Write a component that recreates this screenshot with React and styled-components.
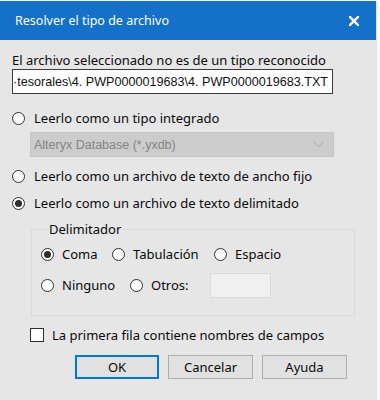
import React from "react";
import styled, { createGlobalStyle } from "styled-components";

const Global = createGlobalStyle`
  html, body { margin: 0; padding: 0; background: #f4f7fb; }
  body { font-family: "Noto Sans", "Open Sans", sans-serif; }
  * { box-sizing: border-box; }
`;

const Screen = styled.div`
  width: 380px;
  height: 400px;
  display: flex;
  padding-top: 1px;
  overflow: hidden;
`;

const Dialog = styled.div`
  width: 376px;
  height: 399px;
  background: #e6e6e6;
  display: flex;
  flex-direction: column;
`;

const Strip = styled.div`
  width: 4px;
  background: #f7f9fc;
  border-left: 1px solid #dbe4ef;
`;

const TitleBar = styled.div`
  height: 39px;
  background: #1570c8;
  color: #fff;
  display: flex;
  align-items: center;
  justify-content: space-between;
  padding: 0 17px 0 15px;
  font-size: 12.5px;
`;

const Body = styled.div`
  display: flex;
  flex-direction: column;
  padding: 11px 0 0 12px;
  color: #0a0a0a;
  font-size: 13px;
`;

const Prompt = styled.div`
  height: 18px;
  line-height: 18px;
`;

const PathBox = styled.div`
  width: 321px;
  height: 25px;
  border: 1px solid #3c3c3c;
  background: #fff;
  display: flex;
  justify-content: flex-end;
  align-items: center;
  overflow: hidden;
  padding-right: 4px;
  font-family: "Liberation Sans", Arial, sans-serif;
  font-size: 12.6px;
  white-space: nowrap;
  color: #111;
`;

const Option = styled.label`
  display: flex;
  align-items: center;
  gap: 9px;
  height: 20px;
  margin-top: ${(p) => p.$mt || 0}px;
  width: ${(p) => (p.$w ? `${p.$w}px` : "auto")};
  flex: none;
  white-space: nowrap;
`;

const Radio = styled.span`
  width: 13px;
  height: 13px;
  border-radius: 50%;
  border: 1px solid #2e2e2e;
  background: #fff;
  display: flex;
  align-items: center;
  justify-content: center;
  flex: none;
  &::after {
    content: "";
    width: 7px;
    height: 7px;
    border-radius: 50%;
    background: ${(p) => (p.$on ? "#2e2e2e" : "transparent")};
  }
`;

const Combo = styled.div`
  margin: 4px 0 0 18px;
  width: 304px;
  height: 25px;
  background: #cccccc;
  border: 1px solid #c4c4c4;
  display: flex;
  align-items: center;
  justify-content: space-between;
  padding: 0 9px 0 3px;
  font-family: "Liberation Sans", Arial, sans-serif;
  font-size: 12.5px;
  color: #848484;
`;

const Group = styled.fieldset`
  margin: 8px 0 0 19px;
  width: 324px;
  border: 1px solid #d9d9d9;
  padding: 7px 0 17px 9px;
  min-width: 0;
  display: flex;
  flex-direction: column;
  gap: 8px;
`;

const Legend = styled.legend`
  padding: 0 1px;
  margin-left: 7px;
  line-height: 16px;
  font-size: 13px;
`;

const GroupRow = styled.div`
  display: flex;
  align-items: center;
  height: ${(p) => p.$h || 20}px;
`;

const SmallOption = styled(Option)`
  gap: 8px;
`;

const OtherInput = styled.div`
  width: 61px;
  height: 25px;
  background: #f0f0f0;
  border: 1px solid #dadada;
`;

const CheckRow = styled.label`
  display: flex;
  align-items: center;
  gap: 8px;
  height: 20px;
  margin: 9px 0 0 18px;
`;

const Check = styled.span`
  width: 14px;
  height: 14px;
  border: 1px solid #2e2e2e;
  background: #fff;
  flex: none;
`;

const Buttons = styled.div`
  display: flex;
  justify-content: flex-end;
  gap: 9px;
  margin-top: 10px;
  padding-right: 29px;
`;

const Button = styled.button`
  width: ${(p) => p.$w}px;
  height: 24px;
  background: #e1e1e1;
  border: ${(p) => (p.$primary ? "2px solid #0078d7" : "1px solid #adadad")};
  font-family: "Noto Sans", "Open Sans", sans-serif;
  font-size: 13px;
  color: #0a0a0a;
  padding: 0;
`;

const Close = () => (
  <svg width="10" height="10" viewBox="0 0 10 10">
    <path d="M1 1 L9 9 M9 1 L1 9" stroke="#fff" strokeWidth="2.4" strokeLinecap="square" />
  </svg>
);

const Chevron = () => (
  <svg width="11" height="7" viewBox="0 0 11 7">
    <path d="M0.5 0.8 L5.5 5.8 L10.5 0.8" fill="none" stroke="#a6a6a6" strokeWidth="1" />
  </svg>
);

export default function App() {
  return (
    <Screen>
      <Global />
      <Dialog>
        <TitleBar>
          <span>Resolver el tipo de archivo</span>
          <Close />
        </TitleBar>
        <Body>
          <Prompt>El archivo seleccionado no es de un tipo reconocido</Prompt>
          <PathBox>·tesorales\4. PWP0000019683\4. PWP0000019683.TXT</PathBox>
          <Option $mt={14}>
            <Radio />
            Leerlo como un tipo integrado
          </Option>
          <Combo>
            <span>Alteryx Database (*.yxdb)</span>
            <Chevron />
          </Combo>
          <Option $mt={9}>
            <Radio />
            Leerlo como un archivo de texto de ancho fijo
          </Option>
          <Option $mt={7}>
            <Radio $on />
            Leerlo como un archivo de texto delimitado
          </Option>
          <Group>
            <Legend>Delimitador</Legend>
            <GroupRow>
              <SmallOption $w={71}>
                <Radio $on />
                Coma
              </SmallOption>
              <SmallOption $w={102}>
                <Radio />
                Tabulación
              </SmallOption>
              <SmallOption>
                <Radio />
                Espacio
              </SmallOption>
            </GroupRow>
            <GroupRow $h={26}>
              <SmallOption $w={89}>
                <Radio />
                Ninguno
              </SmallOption>
              <SmallOption $w={80}>
                <Radio />
                Otros:
              </SmallOption>
              <OtherInput />
            </GroupRow>
          </Group>
          <CheckRow>
            <Check />
            La primera fila contiene nombres de campos
          </CheckRow>
          <Buttons>
            <Button $primary $w={84}>OK</Button>
            <Button $w={85}>Cancelar</Button>
            <Button $w={85}>Ayuda</Button>
          </Buttons>
        </Body>
      </Dialog>
      <Strip />
    </Screen>
  );
}
